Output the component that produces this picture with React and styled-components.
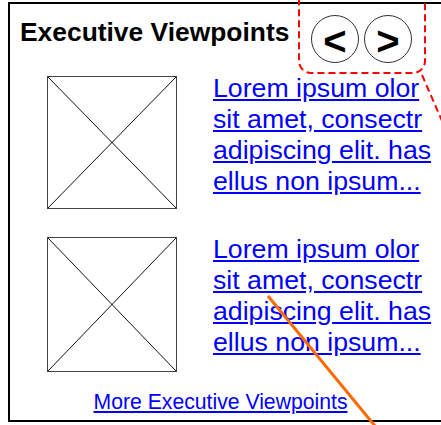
import React from "react";
import styled, { createGlobalStyle } from "styled-components";

const Global = createGlobalStyle`
  html, body { margin: 0; padding: 0; background: #fff; overflow: hidden; }
  body { font-family: "Liberation Sans", Arial, sans-serif; width: 441px; height: 425px; }
`;

const Page = styled.div`
  position: relative;
  width: 441px;
  height: 425px;
  padding: 2px 0 0 8px;
  box-sizing: border-box;
  overflow: hidden;
`;

const Panel = styled.section`
  width: 445px;
  height: 420px;
  box-sizing: border-box;
  border-top: 2px solid #000;
  border-left: 2px solid #000;
  border-bottom: 2px solid #000;
  display: flex;
  flex-direction: column;
`;

const Header = styled.header`
  display: flex;
  align-items: flex-start;
  padding-left: 10px;
`;

const Title = styled.h2`
  flex: 0 0 291px;
  margin: 13px 0 0;
  font-size: 26.4px;
  line-height: 31px;
  font-weight: bold;
  color: #000;
  white-space: nowrap;
`;

const Nav = styled.div`
  display: flex;
  gap: 5px;
  margin-top: 11px;
`;

const NavButton = styled.button`
  width: 48px;
  height: 48px;
  border-radius: 50%;
  border: 1px solid #333;
  background: #fff;
  padding: 4px 0 0;
  box-sizing: border-box;
  display: flex;
  align-items: center;
  justify-content: center;
  font-family: "Liberation Sans", Arial, sans-serif;
  font-weight: bold;
  font-size: 40px;
  line-height: 1;
  color: #000;
`;

const List = styled.div`
  display: flex;
  flex-direction: column;
  gap: 28px;
  margin-top: 13px;
  padding-left: 37px;
`;

const Row = styled.article`
  display: flex;
  align-items: flex-start;
`;

const Thumb = styled.div`
  flex: 0 0 auto;
  width: 130px;
  height: ${(p) => p.$h}px;
  box-sizing: border-box;
  border: 1px solid #444;
  svg { display: block; width: 100%; height: 100%; }
`;

const Blurb = styled.a`
  display: block;
  width: 225px;
  margin: -3px 0 0 36px;
  font-size: 26.7px;
  line-height: 31px;
  color: #0000ff;
  text-decoration: underline;
`;

const Footer = styled.div`
  width: 421px;
  margin-top: 18px;
  text-align: center;
  font-size: 21.2px;
  line-height: 24px;
`;

const MoreLink = styled.a`
  color: #0000ff;
  text-decoration: underline;
`;

const Overlay = styled.svg`
  position: absolute;
  left: 0;
  top: 0;
  width: 441px;
  height: 425px;
  pointer-events: none;
`;

const Placeholder = ({ h }) => (
  <Thumb $h={h}>
    <svg viewBox="0 0 100 100" preserveAspectRatio="none">
      <line x1="0" y1="0" x2="100" y2="100" stroke="#111" strokeWidth="1" vectorEffect="non-scaling-stroke" />
      <line x1="100" y1="0" x2="0" y2="100" stroke="#111" strokeWidth="1" vectorEffect="non-scaling-stroke" />
    </svg>
  </Thumb>
);

const items = [
  { h: 133, text: "Lorem ipsum olor sit amet, consectr adipiscing elit. has ellus non ipsum..." },
  { h: 135, text: "Lorem ipsum olor sit amet, consectr adipiscing elit. has ellus non ipsum..." },
];

export default function App() {
  return (
    <>
      <Global />
      <Page>
        <Panel>
          <Header>
            <Title>Executive Viewpoints</Title>
            <Nav>
              <NavButton aria-label="previous">&lt;</NavButton>
              <NavButton aria-label="next">&gt;</NavButton>
            </Nav>
          </Header>
          <List>
            {items.map((it, i) => (
              <Row key={i}>
                <Placeholder h={it.h} />
                <Blurb href="#">{it.text}</Blurb>
              </Row>
            ))}
          </List>
          <Footer>
            <MoreLink href="#">More Executive Viewpoints</MoreLink>
          </Footer>
        </Panel>
        <Overlay viewBox="0 0 441 425">
          <rect x="299" y="-20" width="126" height="93" rx="12" ry="12" fill="none" stroke="#ff0000" strokeWidth="2" strokeDasharray="7 4" />
          <line x1="422" y1="75" x2="446" y2="130" stroke="#ff0000" strokeWidth="2" strokeDasharray="7 4" />
          <line x1="268" y1="296" x2="380" y2="432" stroke="#ff6a00" strokeWidth="3" />
        </Overlay>
      </Page>
    </>
  );
}
